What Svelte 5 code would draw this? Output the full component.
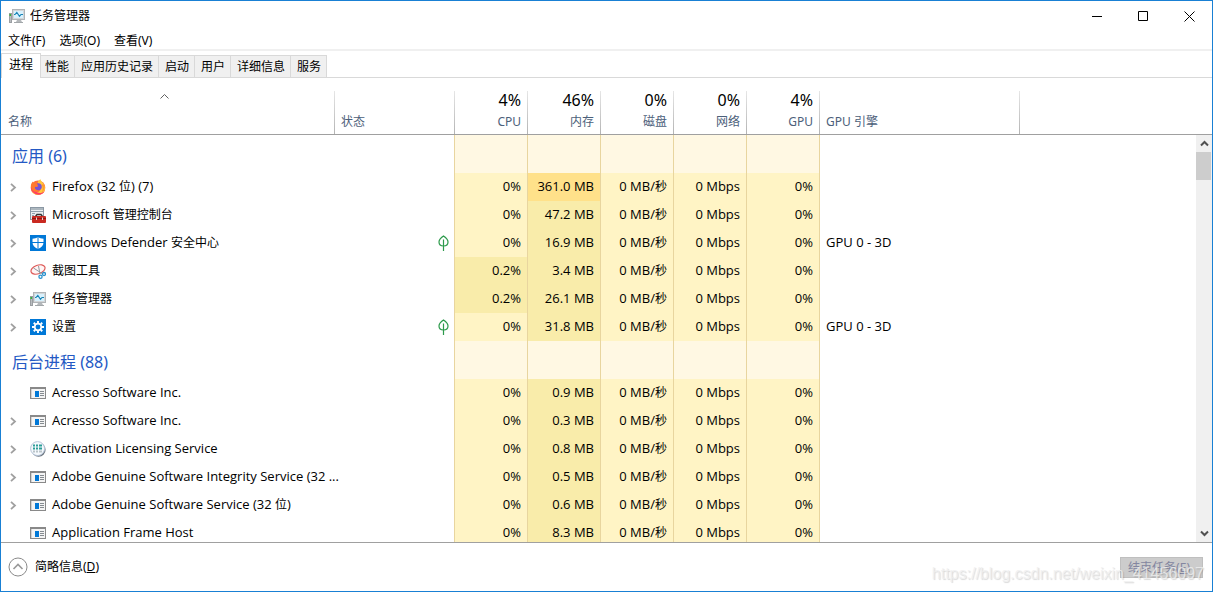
<script lang="ts">
	type Row = {
		name: string;
		icon: string;
		expand?: boolean;
		leaf?: boolean;
		cpu?: string;
		mem: string;
		engine?: string;
	};

	const menus = ['文件(F)', '选项(O)', '查看(V)'];
	const tabs = ['进程', '性能', '应用历史记录', '启动', '用户', '详细信息', '服务'];
	const usage = [
		{ pct: '4%', label: 'CPU' },
		{ pct: '46%', label: '内存' },
		{ pct: '0%', label: '磁盘' },
		{ pct: '0%', label: '网络' },
		{ pct: '4%', label: 'GPU' }
	];

	const groups: { title: string; rows: Row[] }[] = [
		{
			title: '应用 (6)',
			rows: [
				{ name: 'Firefox (32 位) (7)', icon: 'firefox', expand: true, mem: '361.0 MB' },
				{ name: 'Microsoft 管理控制台', icon: 'mmc', expand: true, mem: '47.2 MB' },
				{ name: 'Windows Defender 安全中心', icon: 'defender', expand: true, leaf: true, mem: '16.9 MB', engine: 'GPU 0 - 3D' },
				{ name: '截图工具', icon: 'snip', expand: true, cpu: '0.2%', mem: '3.4 MB' },
				{ name: '任务管理器', icon: 'taskmgr', expand: true, cpu: '0.2%', mem: '26.1 MB' },
				{ name: '设置', icon: 'settings', expand: true, leaf: true, mem: '31.8 MB', engine: 'GPU 0 - 3D' }
			]
		},
		{
			title: '后台进程 (88)',
			rows: [
				{ name: 'Acresso Software Inc.', icon: 'exe', mem: '0.9 MB' },
				{ name: 'Acresso Software Inc.', icon: 'exe', expand: true, mem: '0.3 MB' },
				{ name: 'Activation Licensing Service', icon: 'license', expand: true, mem: '0.8 MB' },
				{ name: 'Adobe Genuine Software Integrity Service (32 ...', icon: 'exe', expand: true, mem: '0.5 MB' },
				{ name: 'Adobe Genuine Software Service (32 位)', icon: 'exe', expand: true, mem: '0.6 MB' },
				{ name: 'Application Frame Host', icon: 'exe', mem: '8.3 MB' }
			]
		}
	];

	let activeTab = $state('进程');

	// Chinese runs are set one size smaller than the latin ones
	const runs = (text: string) => text.match(/[\u4e00-\u9fff]+|[^\u4e00-\u9fff]+/g) ?? [];
	const isHan = (text: string) => /[\u4e00-\u9fff]/.test(text);
</script>

{#snippet mixed(text: string)}{#each runs(text) as run}{#if isHan(run)}<span class="han">{run}</span>{:else}{run}{/if}{/each}{/snippet}

{#snippet icon(name: string)}
	<svg class="icon" viewBox="0 0 16 16" width="16" height="16" aria-hidden="true">
		{#if name === 'taskmgr'}
			<rect x="0.5" y="5.5" width="2" height="9" fill="#b9bdc0" stroke="#9a9ea2" />
			<rect x="0.5" y="6" width="1.500" height="2" fill="#35b43a" />
			<path d="M8 12h4l1.500 3h-7z" fill="#b4b8bb" />
			<rect x="3.5" y="1.5" width="12" height="10" fill="#d3d6d8" stroke="#b0b4b7" />
			<rect x="5" y="3" width="9" height="7" fill="#d8f1fd" />
			<path d="M5 6.500h1L7.800 4.500l2.700 3.800 1.500-1.800h2" fill="none" stroke="#1683b5" stroke-width="1.100" />
			<path d="M5 14.5h9" stroke="#a2a7aa" />
		{:else if name === 'firefox'}
			<circle cx="8" cy="8.7" r="7.3" fill="#ff7139" />
			<path d="M10.500.2c.3 2.200 1.600 2.500 3.100 4.700 2.700 4.100 1.100 8.700-2 10.200C7 17.300 2.800 15 1.500 12c3 2.400 7 1.800 8.500-.5 1.900-2.900.7-5.800-2.300-7.300C7.700 2.500 9 .8 10.500.2z" fill="#ffc83c" />
			<path d="M1 8c0 4 3 7.700 7.500 7.700 3 0 5-1.500 6-3.500-3 2.500-7 2.300-9-.5z" fill="#ff3f63" />
			<path d="M13.800 5.300c1.700 3.500 0 7-2.300 8.400 1.600-2.500 1.700-5.500 0-8.300z" fill="#ff9a2e" />
			<path d="M.8 7.200C.9 4.900 2 3.200 3 2.400c0 1 .4 1.600.7 1.900C6 4 8.200 5.100 7.700 6.500L5 8c.4 2.700 3 3.200 5 2-1.200 3-5.200 4-7.500 1.300z" fill="#ff7a2f" />
			<path d="M7 4.500c3.100-.7 5.200 1.400 4.800 3.900-.4 2.200-2.800 3.300-4.700 2.700C5.200 10.500 4.600 9 5.100 7.800c.9.6 2.600.2 3-.7z" fill="#7652d4" />
		{:else if name === 'mmc'}
			<rect x="0.5" y="0.5" width="13" height="12" fill="#e9edef" stroke="#8b98a4" />
			<path d="M1 2h12" stroke="#71818e" />
			<path d="M1 4.500h12M2 6.500h3M2 8.500h2" stroke="#91a1ad" />
			<path d="M5.500 9.500L7 7.500h4l1.500 2" fill="none" stroke="#343434" stroke-width="1.4" />
			<rect x="2" y="9" width="14" height="7" rx="1" fill="#c92921" />
			<path d="M2 11.5h14" stroke="#8d1815" />
			<path d="M6.500 10.500v2.500M12.500 10.500v2.500" stroke="#e3d5ce" />
		{:else if name === 'defender'}
			<rect width="16" height="16" fill="#0078d7" />
			<path d="M8 2c1.5 1.3 3.4 1.7 5.5 1.7v3.8c0 3-2 5-5.5 6.5-3.5-1.5-5.5-3.5-5.5-6.5V3.7C4.600 3.700 6.500 3.300 8 2z" fill="#fff" />
			<path d="M8 2v12M2 7.500h12" stroke="#0078d7" />
		{:else if name === 'snip'}
			<ellipse cx="8" cy="6.500" rx="7.300" ry="4.300" transform="rotate(-20 8 6.500)" fill="#fff5f5" stroke="#de5b59" stroke-width="1.200" />
			<path d="M3.500 5L12 10.500M8.500 3l1.500 8" stroke="#8f989f" />
			<circle cx="14" cy="11" r="1.500" fill="none" stroke="#2a91cc" stroke-width="1.300" />
			<circle cx="10.500" cy="13.700" r="1.600" fill="none" stroke="#2a91cc" stroke-width="1.300" />
		{:else if name === 'settings'}
			<rect width="16" height="16" fill="#0078d7" />
			<circle cx="8" cy="8" r="3.300" fill="none" stroke="#fff" stroke-width="1.700" />
			<path d="M8 2v2.200M8 11.800V14M2 8h2.200M11.800 8H14M3.760 3.760l1.500 1.500M10.740 10.740l1.500 1.500M12.240 3.760l-1.500 1.500M5.260 10.740l-1.500 1.500" stroke="#fff" stroke-width="1.900" />
		{:else if name === 'license'}
			<circle cx="8.600" cy="8.700" r="7" fill="#6f7780" />
			<circle cx="7.600" cy="7.600" r="7" fill="#f5f9fd" stroke="#b5c4d8" />
			<path d="M3 4.500h2M6 4.500h2M9 4.500h3M3 7.500h2M6 7.500h2M9 7.500h3" stroke="#2b9d98" stroke-width="1.800" />
			<path d="M3 10.500h2M6 10.500h2M9 10.500h3" stroke="#b9c4c9" stroke-width="1.800" />
		{:else}
			<rect x="0.500" y="2.500" width="15" height="11" fill="#f4f4f4" stroke="#898989" />
			<path d="M0 3h16" stroke="#898989" stroke-width="2" />
			<path d="M1 4h1v9H1z" fill="#d3d3d3" />
			<rect x="5" y="6" width="4" height="6" fill="#0078d7" />
			<path d="M10 6.500h4M10 8.500h4M10 10.500h4" stroke="#858b90" />
		{/if}
	</svg>
{/snippet}

<main class="window">
	<header class="titlebar">
		{@render icon('taskmgr')}
		<h1>任务管理器</h1>
		<div class="controls">
			<button aria-label="最小化">
				<svg width="11" height="11"><path d="M0 5.500h10" stroke="#000" /></svg>
			</button>
			<button aria-label="最大化">
				<svg width="10" height="10"><path d="M.5.5h9v9h-9z" fill="none" stroke="#000" /></svg>
			</button>
			<button aria-label="关闭">
				<svg width="11" height="11"><path d="M.5.5l10 10M10.500.5l-10 10" stroke="#000" /></svg>
			</button>
		</div>
	</header>

	<nav class="menu">
		{#each menus as item}
			<button>{item}</button>
		{/each}
	</nav>

	<div class="tabs" role="tablist">
		{#each tabs as tab}
			<button role="tab" aria-selected={tab === activeTab} class:active={tab === activeTab} onclick={() => (activeTab = tab)}>{tab}</button>
		{/each}
	</div>

	<section class="list">
		<div class="table-wrap">
			<table>
				<colgroup>
					<col class="c-name" />
					<col class="c-status" />
					{#each usage as _}
						<col class="c-usage" />
					{/each}
					<col class="c-engine" />
					<col />
				</colgroup>
				<thead>
					<tr>
						<th class="name">
							<svg class="sort" width="9" height="5" aria-hidden="true"><path d="M.5 4.500l4-4 4 4" fill="none" stroke="#606060" /></svg>
							<span>名称</span>
						</th>
						<th>状态</th>
						{#each usage as col}
							<th class="num"><span class="pct">{col.pct}</span>{col.label}</th>
						{/each}
						<th>GPU 引擎</th>
						<td></td>
					</tr>
				</thead>
				<tbody>
					{#each groups as group}
						<tr class="group">
							<th colspan="2" scope="rowgroup">{group.title}</th>
							{#each usage as _}
								<td class="heat"></td>
							{/each}
							<td colspan="2"></td>
						</tr>
						{#each group.rows as row}
							<tr>
								<td>
									<div class="process">
										<span class="toggle">
											{#if row.expand}
												<button aria-label="展开">
													<svg width="7" height="9"><path d="M1 .8l4 3.700-4 3.700" fill="none" stroke="#a0a0a0" stroke-width="1.800" /></svg>
												</button>
											{/if}
										</span>
										{@render icon(row.icon)}
										<span class="label">{@render mixed(row.name)}</span>
									</div>
								</td>
								<td class="status">
									{#if row.leaf}
										<svg width="11" height="16" viewBox="0 0 11 16" aria-hidden="true">
											<path d="M5.500 1C2.500 3 1 5 1 7c0 2.300 1.800 4 4.500 4S10 9.300 10 7c0-2-1.500-4-4.500-6zM5.500 4.500V16" fill="none" stroke="#2c9a4b" stroke-width="1.200" />
										</svg>
									{/if}
								</td>
								<td class="heat low" class:mid={row.cpu}>{row.cpu ?? '0%'}</td>
								<td class="heat mid" class:high={row.mem === '361.0 MB'}>{row.mem}</td>
								<td class="heat low">{@render mixed('0 MB/秒')}</td>
								<td class="heat low">0 Mbps</td>
								<td class="heat low">0%</td>
								<td class="engine">{row.engine ?? ''}</td>
								<td></td>
							</tr>
						{/each}
					{/each}
				</tbody>
			</table>
		</div>
		<div class="side">
			<div class="side-head"></div>
			<div class="scrollbar">
				<button aria-label="向上滚动">
					<svg width="9" height="7"><path d="M1 5.500l3.500-3.500L8 5.500" fill="none" stroke="#505050" stroke-width="2" /></svg>
				</button>
				<div class="thumb"></div>
				<button class="down" aria-label="向下滚动">
					<svg width="9" height="7"><path d="M1 1.500L4.500 5 8 1.500" fill="none" stroke="#505050" stroke-width="2" /></svg>
				</button>
			</div>
		</div>
	</section>

	<footer>
		<button class="fewer">
			<svg width="20" height="20" aria-hidden="true">
				<circle cx="10" cy="10" r="9" fill="none" stroke="#8a8a8a" />
				<path d="M5.500 12L10 7.500l4.500 4.500" fill="none" stroke="#999" stroke-width="1.600" />
			</svg>
			<span>简略信息(<u>D</u>)</span>
		</button>
		<button class="end" disabled>结束任务(<u>E</u>)</button>
		<span class="watermark">https://blog.csdn.net/weixin_41456097</span>
	</footer>
</main>

<style>
	:global(body) {
		margin: 0;
	}
	.window {
		display: flex;
		flex-direction: column;
		box-sizing: border-box;
		height: 100vh;
		border: 1px solid #1980d4;
		background: #fff;
		color: #000;
		font-family: 'Noto Sans', 'Noto Sans CJK SC', sans-serif;
		font-size: 12px;
		line-height: 18px;
		overflow: hidden;
	}
	button {
		padding: 0;
		border: 0;
		background: none;
		color: inherit;
		font: inherit;
	}
	svg {
		display: block;
		flex: none;
	}
	.titlebar {
		display: flex;
		align-items: center;
		height: 30px;
		padding-left: 8px;
		gap: 5px;
	}
	h1 {
		margin: 0;
		font-size: 12px;
		font-weight: 400;
	}
	.controls {
		display: flex;
		height: 28px;
		margin-left: auto;
	}
	.controls button {
		display: grid;
		place-items: center;
		width: 46px;
	}
	.menu {
		display: flex;
		gap: 14px;
		height: 18px;
		padding-left: 7px;
		border-bottom: 2px solid #f0f0f0;
	}
	.menu button {
		line-height: 20px;
	}
	.tabs {
		display: flex;
		align-items: flex-end;
		height: 26px;
		border-bottom: 1px solid #d9d9d9;
	}
	.tabs button {
		height: 22px;
		padding: 0 5px 0 4px;
		border: solid #d9d9d9;
		border-width: 1px 1px 0 0;
		background: #f0f0f0;
	}
	.tabs button:nth-child(n + 3) {
		padding-left: 6px;
	}
	.tabs .active {
		height: 25px;
		margin-bottom: -1px;
		padding: 0 7px 3px;
		border-left-width: 1px;
		background: #fff;
	}
	.list {
		display: flex;
		flex: 1;
		min-height: 0;
		border-bottom: 1px solid #a0a0a0;
	}
	.table-wrap {
		flex: 1;
		min-width: 0;
		overflow: hidden;
	}
	table {
		width: 100%;
		table-layout: fixed;
		border-spacing: 0;
	}
	.c-name {
		width: 334px;
	}
	.c-status {
		width: 120px;
	}
	.c-usage {
		width: 73px;
	}
	.c-engine {
		width: 200px;
	}
	th,
	td {
		box-sizing: border-box;
		padding: 0;
		font-weight: 400;
		text-align: left;
	}
	thead th,
	thead td {
		height: 57px;
		padding: 0 7px 3px 6px;
		border-bottom: 1px solid #a0a0a0;
		color: #4c607a;
		vertical-align: bottom;
	}
	thead th {
		background: linear-gradient(#e6e6e6, #b4b4b4) right bottom / 1px 43px no-repeat;
	}
	thead .name {
		padding: 0 7px 3px;
	}
	.sort {
		margin: 0 auto 14px 152px;
	}
	thead .num {
		text-align: right;
	}
	.pct {
		display: block;
		color: #000;
		font-size: 16px;
		line-height: 26px;
	}
	tbody td {
		height: 28px;
		font-family: 'Open Sans', 'Noto Sans CJK SC', sans-serif;
		font-size: 13px;
	}
	.group th {
		height: 38px;
		padding: 4px 0 0 11px;
		border-right: 1px solid #e8d59f;
		color: #2459c4;
		font-size: 16px;
	}
	.heat {
		padding: 0 6px 2px 0;
		border-right: 1px solid #e8d59f;
		background: #fff8e3;
		text-align: right;
		white-space: nowrap;
	}
	.low {
		background: #fff4c5;
	}
	.mid {
		background: #f9ecaa;
	}
	.high {
		background: #ffe18a;
	}
	.process {
		display: flex;
		align-items: center;
		padding-left: 9px;
	}
	.toggle {
		flex: none;
		width: 20px;
	}
	.toggle button {
		display: block;
	}
	.label {
		margin-left: 6px;
		padding-bottom: 2px;
		white-space: nowrap;
	}
	.han {
		font-size: 12px;
	}
	.status {
		border-right: 1px solid #e8d59f;
	}
	.status svg {
		margin: 0 5px 0 auto;
	}
	.engine {
		padding: 0 0 2px 6px;
	}
	.side {
		display: flex;
		flex-direction: column;
		width: 16px;
	}
	.side-head {
		box-sizing: border-box;
		height: 57px;
		border-bottom: 1px solid #a0a0a0;
	}
	.scrollbar {
		display: flex;
		flex: 1;
		flex-direction: column;
		background: #f0f0f0;
	}
	.scrollbar button {
		display: grid;
		place-items: center;
		height: 17px;
	}
	.scrollbar .down {
		margin-top: auto;
	}
	.thumb {
		height: 28px;
		margin-right: 1px;
		background: #cdcdcd;
	}
	footer {
		position: relative;
		display: flex;
		align-items: center;
		justify-content: space-between;
		height: 48px;
		padding: 0 9px 0 7px;
	}
	.fewer {
		display: flex;
		align-items: center;
		gap: 7px;
	}
	.end {
		height: 21px;
		padding: 0 12px 0 7px;
		border: 1px solid #bfbfbf;
		background: #ccc;
		color: #8386a0;
		line-height: 19px;
	}
	.watermark {
		position: absolute;
		right: 8px;
		bottom: 8px;
		color: rgba(240, 240, 240, 0.8);
		font-family: 'Liberation Sans', sans-serif;
		font-size: 16px;
		text-shadow: 1px 1px 1px rgba(0, 0, 0, 0.15);
		pointer-events: none;
	}
</style>
